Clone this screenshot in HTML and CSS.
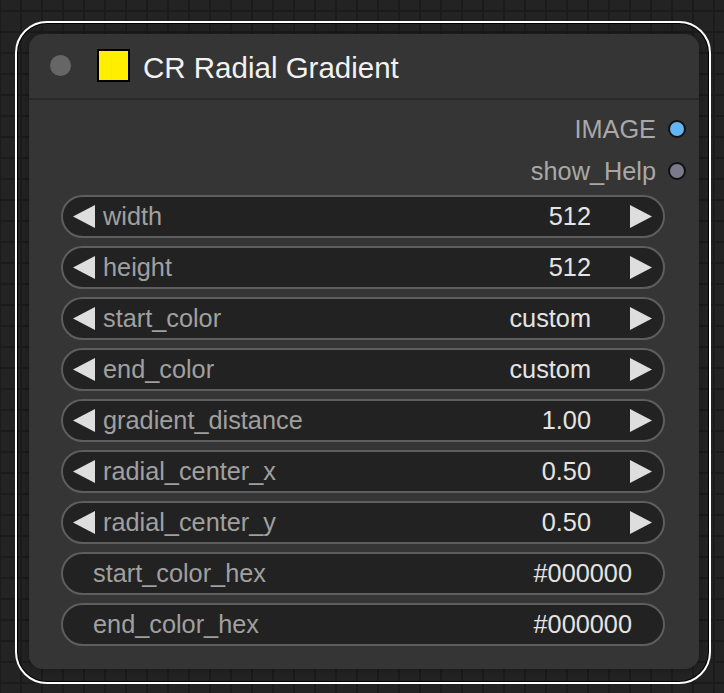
FILE: index.html
```html
<!DOCTYPE html>
<html>
<head>
<meta charset="utf-8">
<link rel="stylesheet" href="styles.css">
</head>
<body>
<div class="frame">
  <div class="node">
    <div class="header">
      <span class="collapse-dot"></span>
      <span class="swatch"></span>
      <span class="title">CR Radial Gradient</span>
    </div>
    <div class="body">
      <div class="outputs">
        <div class="output"><span class="out-label">IMAGE</span><span class="slot slot-image"></span></div>
        <div class="output"><span class="out-label">show_Help</span><span class="slot slot-help"></span></div>
      </div>
      <div class="widgets">
        <div class="widget num">
          <svg class="arrow" viewBox="0 0 22 23"><polygon points="0,11.5 22,0 22,23"/></svg>
          <span class="label">width</span><span class="value">512</span>
          <svg class="arrow" viewBox="0 0 22 23"><polygon points="22,11.5 0,0 0,23"/></svg>
        </div>
        <div class="widget num">
          <svg class="arrow" viewBox="0 0 22 23"><polygon points="0,11.5 22,0 22,23"/></svg>
          <span class="label">height</span><span class="value">512</span>
          <svg class="arrow" viewBox="0 0 22 23"><polygon points="22,11.5 0,0 0,23"/></svg>
        </div>
        <div class="widget num">
          <svg class="arrow" viewBox="0 0 22 23"><polygon points="0,11.5 22,0 22,23"/></svg>
          <span class="label">start_color</span><span class="value">custom</span>
          <svg class="arrow" viewBox="0 0 22 23"><polygon points="22,11.5 0,0 0,23"/></svg>
        </div>
        <div class="widget num">
          <svg class="arrow" viewBox="0 0 22 23"><polygon points="0,11.5 22,0 22,23"/></svg>
          <span class="label">end_color</span><span class="value">custom</span>
          <svg class="arrow" viewBox="0 0 22 23"><polygon points="22,11.5 0,0 0,23"/></svg>
        </div>
        <div class="widget num">
          <svg class="arrow" viewBox="0 0 22 23"><polygon points="0,11.5 22,0 22,23"/></svg>
          <span class="label">gradient_distance</span><span class="value">1.00</span>
          <svg class="arrow" viewBox="0 0 22 23"><polygon points="22,11.5 0,0 0,23"/></svg>
        </div>
        <div class="widget num">
          <svg class="arrow" viewBox="0 0 22 23"><polygon points="0,11.5 22,0 22,23"/></svg>
          <span class="label">radial_center_x</span><span class="value">0.50</span>
          <svg class="arrow" viewBox="0 0 22 23"><polygon points="22,11.5 0,0 0,23"/></svg>
        </div>
        <div class="widget num">
          <svg class="arrow" viewBox="0 0 22 23"><polygon points="0,11.5 22,0 22,23"/></svg>
          <span class="label">radial_center_y</span><span class="value">0.50</span>
          <svg class="arrow" viewBox="0 0 22 23"><polygon points="22,11.5 0,0 0,23"/></svg>
        </div>
        <div class="widget text">
          <span class="label">start_color_hex</span><span class="value">#000000</span>
        </div>
        <div class="widget text">
          <span class="label">end_color_hex</span><span class="value">#000000</span>
        </div>
      </div>
    </div>
  </div>
</div>
</body>
</html>
```

FILE: styles.css
```css
* { box-sizing: border-box; }

html, body {
  margin: 0;
  padding: 0;
}

body {
  width: 724px;
  height: 693px;
  overflow: hidden;
  background-color: #232323;
  background-image:
    linear-gradient(to right, #1b1b1b 0, #1b1b1b 2px, transparent 2px),
    linear-gradient(to bottom, #1b1b1b 0, #1b1b1b 2px, transparent 2px);
  background-size: 21px 21px;
  background-position: 20px 10px;
  font-family: "Liberation Sans", Arial, sans-serif;
  padding: 21px 0 0 15px;
}

.frame {
  width: 696px;
  height: 663px;
  border: 2px solid #ffffff;
  border-radius: 32px;
  box-shadow: inset 0 0 0 1px #000;
  padding: 11px 10px 13px 12px;
  display: flex;
}

.node {
  flex: 1;
  background: #353535;
  border-radius: 14px;
  box-shadow: 0 0 8px rgba(0,0,0,0.35);
  display: flex;
  flex-direction: column;
}

.header {
  height: 66px;
  border-bottom: 2px solid #2a2a2a;
  display: flex;
  align-items: center;
  padding-left: 21px;
  padding-bottom: 1px;
}

.collapse-dot {
  width: 21px;
  height: 21px;
  border-radius: 50%;
  background: #666;
  margin-right: 26px;
}

.swatch {
  width: 33px;
  height: 33px;
  background: #ffee00;
  border: 2px solid #000;
  margin-right: 13px;
}

.title {
  color: #f2f2f2;
  font-size: 29.5px;
  line-height: 1;
  position: relative;
  top: 2px;
}

.body {
  padding: 8px 0 0 32px;
  display: flex;
  flex-direction: column;
}

.outputs {
  display: flex;
  flex-direction: column;
  padding-right: 13px;
}

.output {
  height: 42px;
  display: flex;
  align-items: center;
  justify-content: flex-end;
  gap: 12px;
}

.out-label {
  color: #a8a8a8;
  font-size: 25.3px;
  line-height: 1;
  position: relative;
  top: 1px;
}

.slot {
  width: 18px;
  height: 18px;
  border-radius: 50%;
  border: 2px solid #111;
}

.slot-image { background: #64b5f6; }
.slot-help { background: #7b7a8a; }

.widgets {
  margin-top: 3px;
  display: flex;
  flex-direction: column;
  gap: 8px;
  width: 604px;
}

.widget {
  height: 43px;
  border: 2px solid #5e5e5e;
  border-radius: 22px;
  background: #222;
  display: flex;
  align-items: center;
  font-size: 25.3px;
}

.widget .label {
  color: #a0a0a0;
  flex: 1;
  white-space: nowrap;
}

.widget .value {
  color: #e4e4e4;
  white-space: nowrap;
}

.widget.num {
  padding: 0 11px 0 10px;
}

.widget.num .arrow {
  width: 22px;
  height: 23px;
  fill: #dedede;
  flex: none;
}

.widget.num .arrow:first-child {
  margin-right: 8px;
}

.widget.num .value {
  margin-right: 39px;
}

.widget.text {
  padding: 0 31px 0 30px;
}
```
